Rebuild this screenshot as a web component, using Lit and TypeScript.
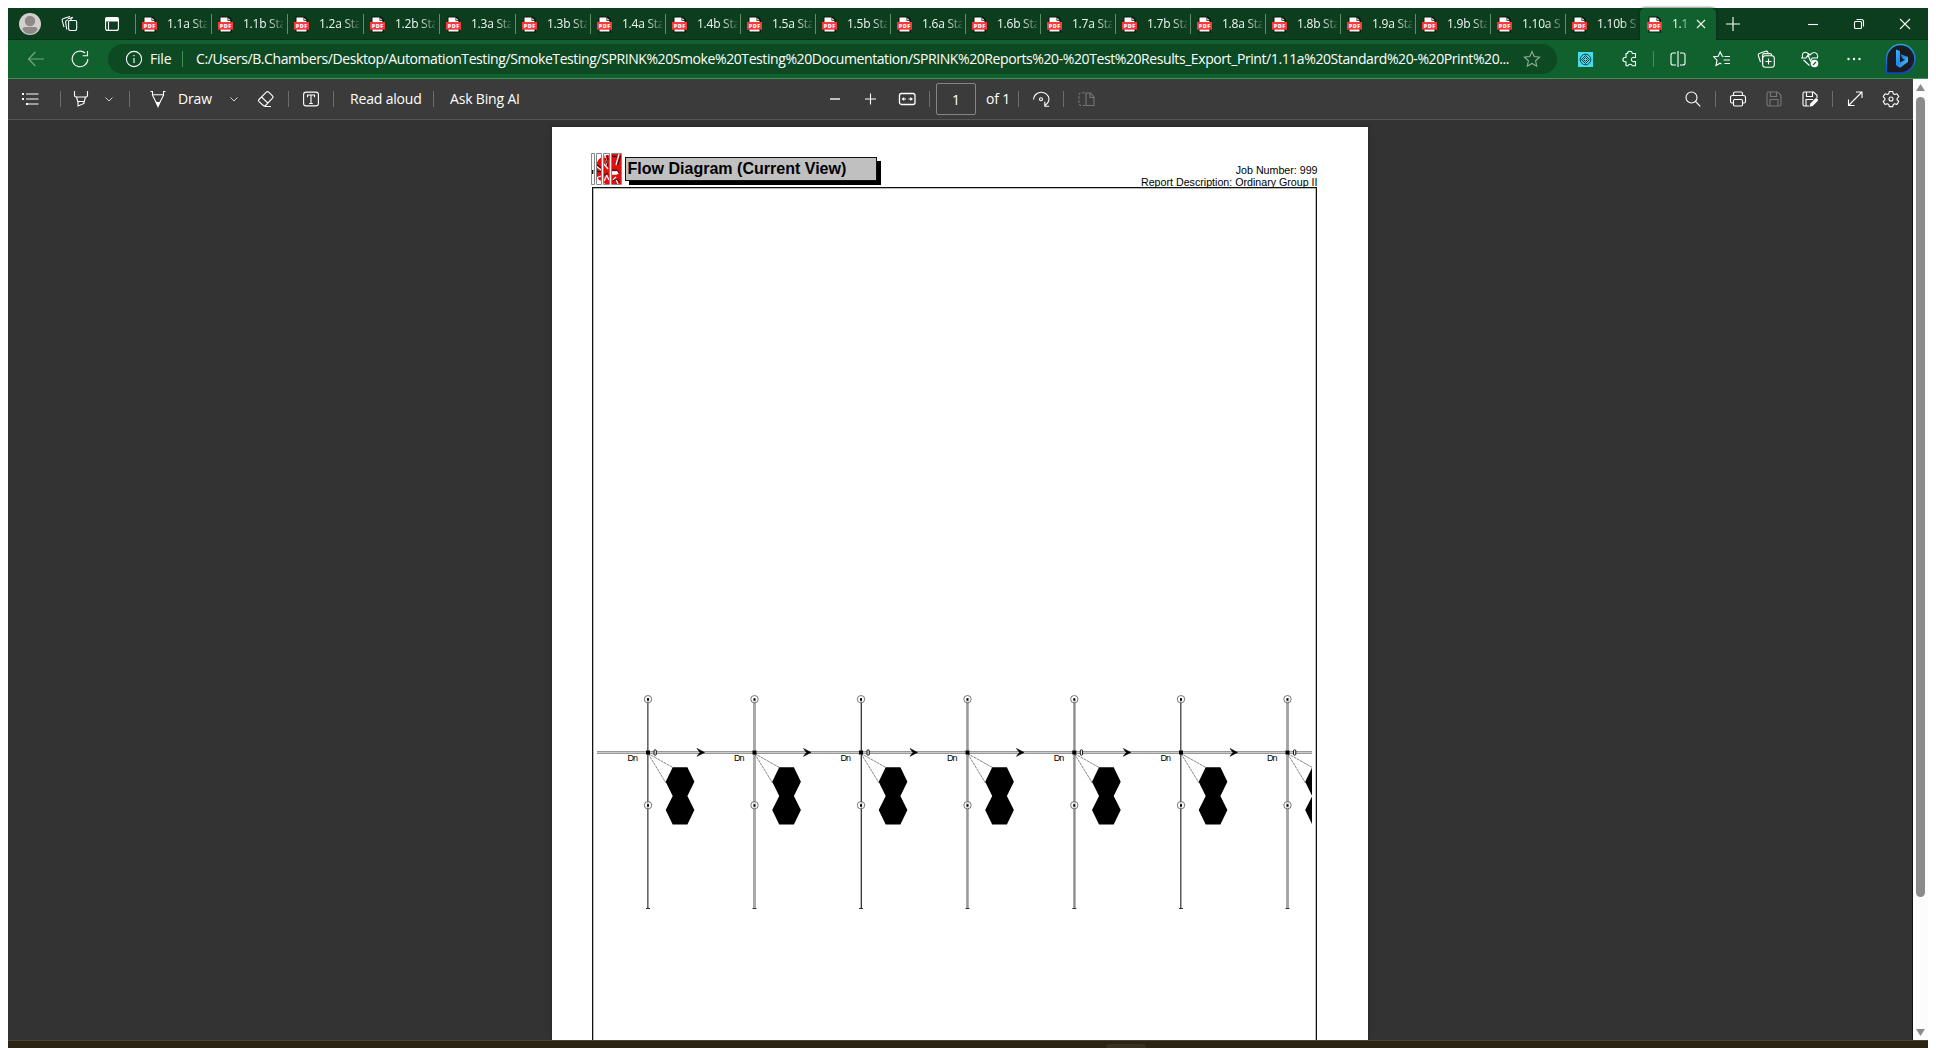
import { LitElement, html, css, svg, nothing } from "lit";
import { customElement, property } from "lit/decorators.js";

const icons: Record<string, unknown> = {
  workspaces: svg`<path d="M2.500 3.500 9 1.500M2.500 3.500Q.8 4 1.200 5.600l1.800 6.500M5.800 5.200Q4.400 5.600 4.600 7.200l1.200 7.300M5.800 5.200l1.200-.4M7 3.700l5-1.400M8.500 5.500h5.500q1.700 0 1.700 1.700v6.600q0 1.700-1.700 1.700H9.300q-1.700 0-1.700-1.700V6.500q0-1 .9-1zM10 5.300V4.200q0-1.500 1.500-1.500h.5"/>`,
  tabmenu: svg`<rect x="2.600" y="2.600" width="12.800" height="12.800" rx="2"/><path d="M3 3h12v3H3z" fill="currentColor"/><path d="M5.500 7v8"/>`,
  back: svg`<path d="M17 9H1.500M8.300 2 1.500 9l6.800 7"/>`,
  reload: svg`<path d="M16.800 9a7.800 7.800 0 1 1-2.700-6M16.500 1v4.800h-4.800"/>`,
  info: svg`<circle cx="9" cy="9" r="7.600"/><path d="M9 8v5M9 5v1.300"/>`,
  star: svg`<path d="m9 1.500 2.200 5 5.400.6-4 3.700 1.100 5.400L9 13.500l-4.700 2.700 1.100-5.400-4-3.700 5.400-.6z"/>`,
  puzzle: svg`<path d="M5 3.500h1.500a2.400 2.200 0 1 1 4.800 0H14.500v4h-1a2.200 2.200 0 1 0 0 4h1v4.300h-3.200a2.200 2 0 0 0-4.300 0H5V11.700H4a2.100 2.100 0 1 1 0-4.200h1z" stroke-linejoin="round"/>`,
  split: svg`<path d="M7 3H4Q2 3 2 5v8q0 2 2 2h3M11 3h3q2 0 2 2v8q0 2-2 2h-3M9 1v16"/>`,
  favs: svg`<path d="M10.500 6.500 9.300 6.300 7.200 1.800 5.200 6.300l-4.500.5L4 10.200 3 15.500l4-2.300 1.500.9M11.500 6.500H17M10.500 10H17M11.500 13.500H17"/>`,
  collections: svg`<rect x="5.700" y="5.700" width="11.600" height="11.600" rx="2.500"/><path d="M11.500 8.500v6M8.500 11.500h6M3.500 12 1.300 5.500Q.9 4 2.300 3.400L8.500 1.200Q10 .8 10.700 2l.6 1.700M5.500 14V5.500Q5.700 3.600 7.500 3.600H13q1.500 0 2 2"/>`,
  heart: svg`<path d="M8.500 15.500 2.500 10M16.300 8q1-2.300-.3-4-2.800-3-6 0L8.900 5 7.800 4Q4.500 1 2 3.300.8 5.300 1.500 7.500M0 8h5l2-3 2.500 6 1.700-3H17"/><circle cx="13.500" cy="13.500" r="3.800" fill="currentColor" stroke="none"/><path d="m12 15 3-3" stroke="#11612e"/>`,
  dots: svg`<g fill="currentColor" stroke="none"><circle cx="3.500" cy="9" r="1.200"/><circle cx="9" cy="9" r="1.200"/><circle cx="14.500" cy="9" r="1.200"/></g>`,
  close: svg`<path d="m5 5 8 8m0-8-8 8"/>`,
  winclose: svg`<path d="m4 4 10 10M14 4 4 14"/>`,
  newtab: svg`<path d="M9 2v14M2 9h14"/>`,
  minimize: svg`<path d="M4 9.500h10"/>`,
  restore: svg`<path d="M6.500 4.500h5q2 0 2 2v5"/><rect x="4.500" y="6.500" width="7" height="7" rx="1"/>`,
  list: svg`<path d="M5 4h12.500M5 9h12.500M5 14h12.500"/><path d="M1 3h2v2H1zM1 8h2v2H1zM5 13h2v2H5z" fill="currentColor" stroke="none"/>`,
  highlighter: svg`<path d="M2.500 1v4Q2.500 7 4 7h10q1.500 0 1.500-2V1M4.500 7l1.200 4.500h6.600L13.500 7M6 11.500V16l6-2.500v-2"/>`,
  chevron: svg`<path d="m5.500 7.500 3.500 3.500 3.500-3.500" stroke-width=".9" opacity=".85"/>`,
  pen: svg`<path d="M1.500 1.500h2v3.200h11V1.500h2M3.200 4.700 8 14h2l4.800-9.300"/><path d="M7.300 12.500h3.400L9 16.500z" fill="currentColor"/>`,
  eraser: svg`<path d="m2 9.500 7.300-7.300q1.200-1.200 2.400 0l3.800 3.600q1.200 1.200 0 2.400L8.500 15.500q-1 1-2.200 0L2 11.700q-1.100-1.100 0-2.200zM4.600 7l6.200 6.200M7.500 16.500H14"/>`,
  textbox: svg`<rect x="1.600" y="2.100" width="14.800" height="13.800" rx="2.500"/><path d="M5.500 7.200V5h7v2.200M9 5v8.500M7.200 13.500h3.600"/>`,
  minus: svg`<path d="M4 9h10" stroke-width="1.800" opacity=".75"/>`,
  plus: svg`<path d="M4 9h11M9.500 3.500v11"/>`,
  fit: svg`<rect x="1.500" y="3.500" width="15.500" height="11" rx="2" stroke-width="1.300"/><path d="M4 9h4M10.500 9h4"/><path d="M6.200 7V11L3.800 9zM12.300 7V11L14.700 9z" fill="currentColor" stroke="none"/>`,
  rotate: svg`<path d="M1.500 9.500A7.800 7.500 0 0 1 17 8.500q0 4.500-4.500 7.200M12.800 11.700v4.500h4.300"/><circle cx="9" cy="9.200" r="1.500"/>`,
  pages: svg`<path d="M9 3h4.500L17 7v8.500H9zM13 3v4.500h4"/><path d="M7.500 2.800H4.500Q2 2.800 2 5v8q0 2.500 2.500 2.500H8" stroke-dasharray="2.500 1.500"/>`,
  search: svg`<circle cx="7.500" cy="7.500" r="5.500"/><path d="m11.500 11.500 4.800 4.800"/>`,
  print: svg`<path d="M4.500 5.500v-2q0-1.500 1.500-1.500h6q1.500 0 1.500 1.500v2M4.500 13H3q-1.500 0-1.500-1.500V7.500q0-2 2-2h11q2 0 2 2v4q0 1.500-1.500 1.500h-1.500"/><rect x="4.500" y="9.500" width="9" height="6.500" rx="1.200"/>`,
  save: svg`<path d="M3.500 2h9L16 5.300V14.500q0 1.500-1.500 1.500h-11Q2 16 2 14.500v-11Q2 2 3.500 2zM5.500 2v4.500h6V2M5 16V9.500h8V16"/>`,
  saveas: svg`<path d="M8 16H3.500Q2 16 2 14.500v-11Q2 2 3.500 2h9L16 5.300V8M5.500 2v4.500h6V2M5 16V9.500h7"/><path d="m8.500 16.800.8-3.200 5-5q1.200-.8 2.200.2t.2 2.200l-5 5z" fill="currentColor" stroke="none"/>`,
  expand: svg`<path d="M10 2h6v6M16 2 2.500 15.500M2.500 9.500v6h6"/>`,
  gear: svg`<path d="M7.300 1.500h3.400l.6 2.300 1.300.7 2.300-.8 1.900 2.900-1.700 1.700v1.500l1.700 1.700-1.900 2.900-2.300-.7-1.300.7-.6 2.200H7.300l-.6-2.200-1.300-.7-2.300.7-1.900-2.900 1.700-1.700V8.300L1.200 6.600l1.900-2.900 2.300.8 1.300-.7z" stroke-linejoin="round"/><circle cx="9" cy="9" r="2"/>`,
};

const glyph = (name: string, cls = "") => html`
  <svg class="icon ${cls}" width="18" height="18" viewBox="0 0 18 18" fill="none" stroke="currentColor" stroke-width="1.1">${icons[name]}</svg>`;

const pdfBadge = html`
  <svg class="pdf" width="17" height="17" viewBox="0 0 17 17">
    <path d="M2.500.5H12l3 3v13H2.500z" fill="#07190d"/>
    <path d="M3.500 1.500h7.500l2.500 2.500v11.500h-10z" fill="#fff"/>
    <path d="M10.500 1h1.500l2.500 2.500v1.200h-4z" fill="#07190d"/>
    <path d="M11.300 2v2h2z" fill="#fff"/>
    <rect x="1" y="6" width="15" height="7.700" fill="#f8383b"/>
    <text x="8.500" y="11.900" text-anchor="middle" textLength="11.500" class="pdf-text">PDF</text>
  </svg>`;

@customElement("browser-tab")
class BrowserTab extends LitElement {
  @property() label = "";
  @property({ type: Boolean, reflect: true }) active = false;
  static styles = css`
    :host { display: flex; width: 75px; box-sizing: border-box; align-items: center; padding-left: 6px; color: #f2f7f3;
      height: 32px; background: linear-gradient(#5c9065, #5c9065) 0 6px / 1px 20px no-repeat; flex: none; }
    :host([wide]) { width: 76px; }
    :host([active]) { width: 76px; background: #11612e; border-radius: 5px 5px 0 0; box-shadow: 0 0 3px #062612; }
    .pdf { flex: none; }
    .pdf-text { font: 800 5.500px "Open Sans", sans-serif; fill: #fff; }
    .label { margin-left: 9px; width: 40px; overflow: hidden; white-space: nowrap; font: 12px/18px "Open Sans", sans-serif;
      letter-spacing: -0.25px; mask-image: linear-gradient(90deg, #000 60%, transparent 110%); }
    :host([active]) .label { width: 16px; }
    .icon { margin-left: 4px; }
  `;
  render() {
    return html`${pdfBadge}<span class="label">${this.label}</span>${this.active ? glyph("close") : nothing}`;
  }
}

interface Branch { x: number; strokes: string[]; mark: boolean; }
const branches: Branch[] = [
  { x: 648, strokes: ["#666", "#a0a0a0"], mark: true },
  { x: 754.500, strokes: ["#aaa", "#aaa", "#aaa"], mark: false },
  { x: 861, strokes: ["#bbb", "#3a3a3a"], mark: true },
  { x: 967.500, strokes: ["#aaa", "#999", "#b4b4b4"], mark: false },
  { x: 1074.300, strokes: ["#aaa", "#8c8c8c", "#b8b8b8"], mark: true },
  { x: 1181, strokes: ["#5a5a5a", "#aaa"], mark: false },
  { x: 1287.500, strokes: ["#aaa", "#a4a4a4", "#aaa"], mark: true },
];

@customElement("flow-diagram")
class FlowDiagram extends LitElement {
  static styles = css`
    :host { display: block; }
    svg { display: block; }
    .dn { font: 9px "Liberation Sans", Arial, sans-serif; }
  `;
  private sprinkler(x: number, y: number) {
    return svg`<circle cx=${x} cy=${y} r="3.700" fill="#fff" fill-opacity=".6" stroke="#555" stroke-width=".8"/>
      <rect x=${x - 1} y=${y - 1} width="2" height="2.500"/>`;
  }
  private branch(b: Branch) {
    const { x } = b;
    const left = Math.floor(x) - 1;
    return svg`
      ${b.strokes.map((c, i) => svg`<rect x=${left + i} y="699" width="1" height="209.500" fill=${c}/>`)}
      <rect x=${x - 2} y="908" width="4" height="1" fill="#333"/>
      ${this.sprinkler(x, 699.200)}${this.sprinkler(x, 805.200)}
      <path d="M${x} 753.500 L${x + 24.500} 767.300 M${x} 753.500 L${x + 18} 783" stroke="#555" stroke-width=".7" stroke-dasharray="3 .6" fill="none"/>
      <rect x=${x - 2} y="750.500" width="4" height="4"/>
      ${b.mark ? svg`<rect x=${x + 6} y="749.800" width="2.300" height="5.400" rx="1" fill="#eee" stroke="#111"/>` : nothing}
      <text class="dn" x=${x - 20.500} y="761.300" textLength="10.500">Dn</text>
      <path d="M${x + 49} 748.500 L${x + 56.500} 752.400 L${x + 49} 756.300 L${x + 52} 752.400z" stroke="#000" stroke-width=".6"/>
      <path d="M${x + 24.700} 767.300h14.700l7 14.500-7 14.300 7 14-7 14.400h-14.700l-7-14.400 7-14-7-14.300z"/>`;
  }
  render() {
    return html`
      <svg width="723" height="851" viewBox="593 188 723 851">
        <clipPath id="view"><rect x="597" y="189" width="715" height="851"/></clipPath>
        <g clip-path="url(#view)">
          <rect x="597" y="751" width="715" height="3" fill="#999"/>
          <rect x="597" y="752" width="715" height="1" fill="#ccc"/>
          ${branches.map((b) => this.branch(b))}
        </g>
      </svg>`;
  }
}

@customElement("app-root")
class AppRoot extends LitElement {
  static styles = css`
    :host { display: block; height: 1048px; overflow: hidden; background: #fff; }
    .window { display: flex; flex-direction: column; width: 1920px; height: 1040px; margin: 8px 0 0 8px;
      font: 14px/20px "Open Sans", sans-serif; color: #fff; }
    svg { flex: none; }
    .tabs { display: flex; align-items: center; height: 32px; background: #0c3d1e; box-shadow: inset 0 -1px #0a2f17; }
    .avatar { margin-left: 11px; }
    .workspaces { margin-left: 20px; }
    .tabmenu { margin: 0 14px 0 24px; }
    .newtab { margin-left: 8px; }
    .min { margin-left: 62px; }
    .win { margin-left: 28px; }
    .address { display: flex; align-items: center; height: 39px; box-sizing: border-box; background: #11612e; border-bottom: 1px solid #3e9057; }
    .back { margin-left: 19px; color: #6fae7f; }
    .reload { margin-left: 26px; }
    .pill { display: flex; align-items: center; box-sizing: border-box; width: 1449px; height: 30px; margin-left: 19px; padding-left: 17px;
      border-radius: 15px; background: #0d4a23; white-space: nowrap; }
    .file { width: 32px; margin-left: 7px; letter-spacing: -0.2px; }
    .sep { width: 1px; height: 16px; background: #6c6c6c; flex: none; }
    .address .sep { background: #3f8f56; }
    .url { width: 1314px; flex: none; margin-left: 13px; letter-spacing: -0.412px; }
    .star { margin-left: 13px; color: #8fae99; }
    .ext { margin-left: 21px; }
    .puzzle { margin: 0 14px 0 28px; }
    .split { margin-left: 15px; }
    .act { margin-left: 26px; }
    .bing { margin-left: 22px; }
    .body { display: flex; flex: 1; min-height: 0; }
    .viewer { display: flex; flex-direction: column; width: 1905px; background: #333; box-sizing: border-box; }
    .pdfbar { display: grid; align-items: center; height: 41px; box-sizing: border-box; padding-left: 13px; background: #3b3b3b;
      border-bottom: 1px solid #555; white-space: nowrap; flex: none;
      grid-template-columns: 39px 12px 28px 29px 20px 29px 47px 32px 31px 14px 31px 17px 83px 17px 376px 35px 37px 31px 7px 50px 32px 14px 31px 14px 607px 31px 14px 36px 36px 31px 14px 36px 18px; }
    .dim { color: #777; }
    .pagebox { width: 40px; height: 32px; box-sizing: border-box; border: 1px solid #858585; border-radius: 2px; text-align: center; line-height: 31px; }
    .tight { letter-spacing: -0.17px; }
    .canvas { display: flex; justify-content: center; flex: 1; min-height: 0; padding: 7px 0 0 0; border-right: 1px solid #111; }
    .page { width: 816px; margin-right: 1px; background: #fff; color: #000; box-shadow: 0 0 4px #222; box-sizing: border-box; padding: 26px 50px 0 39px; overflow: hidden; }
    .head { display: flex; height: 34px; }
    .title { width: 252px; height: 24px; margin: 4px 0 0 3px; box-sizing: border-box; border: 1px solid #111; background: #c0c0c0;
      box-shadow: 4px 4px #000; padding-left: 2px; font: bold 16.050px/21px "Liberation Sans", Arial, sans-serif; white-space: nowrap; }
    .meta { margin: 11px 0 0 auto; text-align: right; font: 10.670px/12px "Liberation Sans", Arial, sans-serif; white-space: nowrap; }
    .frame { margin-left: 1px; width: 723px; height: 860px; border: 1px solid #111; box-shadow: inset 0 0 0 .5px #777; }
    .scroll { display: flex; flex-direction: column; align-items: center; justify-content: space-between; width: 15px; padding: 5px 0 4px; box-sizing: border-box; background: #fcfcfc; }
    .thumb { width: 9px; height: 800px; border-radius: 5px; background: #8b8b8b; margin: 6px 0 auto; }
    .strip { height: 8px; box-sizing: border-box; background: #2b2415; border-top: 1px solid #4a4438; flex: none; display: flex; justify-content: center; }
    .notch { width: 40px; height: 4px; margin: 3px 0 0 315px; border-radius: 4px 4px 0 0; background: #39311f; }
  `;
  render() {
    const names = Array.from({ length: 10 }, (_, i) => i < 9
      ? [`1.${i + 1}a Sta`, `1.${i + 1}b Sta`]
      : [`1.${i + 1}a S`, `1.${i + 1}b S`]).flat();
    const sep = html`<span class="sep"></span>`;
    return html`
      <div class="window">
        <div class="tabs">
          <svg class="avatar" width="22" height="22" viewBox="0 0 22 22">
            <circle cx="11" cy="11" r="11" fill="#d2cfcc"/><circle cx="11" cy="8" r="5.200" fill="#8e8a87"/>
            <path d="M3.500 16.500Q3.500 14 6 14h10q2.500 0 2.500 2.500Q16 21 11 21T3.500 16.500z" fill="#8e8a87"/>
          </svg>
          ${glyph("workspaces", "workspaces")}${glyph("tabmenu", "tabmenu")}
          ${names.map((n, i) => html`<browser-tab label=${n} ?wide=${i < 5}></browser-tab>`)}
          <browser-tab label="1.11" active></browser-tab>
          ${glyph("newtab", "newtab")}${glyph("minimize", "min")}${glyph("restore", "win")}${glyph("winclose", "win")}
        </div>
        <div class="address">
          ${glyph("back", "back")}${glyph("reload", "reload")}
          <div class="pill">
            ${glyph("info")}<span class="file">File</span>${sep}
            <span class="url">C:/Users/B.Chambers/Desktop/AutomationTesting/SmokeTesting/SPRINK%20Smoke%20Testing%20Documentation/SPRINK%20Reports%20-%20Test%20Results_Export_Print/1.11a%20Standard%20-%20Print%20...</span>
            ${glyph("star", "star")}
          </div>
          <svg class="ext" width="15" height="15" viewBox="0 0 15 15" fill="none" stroke="#123a40">
            <rect width="15" height="15" fill="#45dcec" stroke="none"/><circle cx="7.500" cy="7.500" r="5.300"/>
            <path d="m3.500 7.500 4-4 4 4-4 4zM5.500 7.500l2-2 2 2-2 2z"/>
          </svg>
          ${glyph("puzzle", "puzzle")}${sep}${glyph("split", "split")}${glyph("favs", "act")}${glyph("collections", "act")}${glyph("heart", "act")}${glyph("dots", "act")}
          <svg class="bing" width="32" height="32" viewBox="0 0 32 32">
            <defs>
              <linearGradient id="ring" x2="0" y2="1"><stop stop-color="#2b9fe0"/><stop offset="1" stop-color="#1440c8"/></linearGradient>
              <linearGradient id="b" x2="1" y2="1"><stop stop-color="#38b6ff"/><stop offset=".5" stop-color="#2284f0"/><stop offset="1" stop-color="#52dcf5"/></linearGradient>
            </defs>
            <path d="M1.500 30V16a14.200 14.200 0 1 1 14.500 14z" fill="#1b1c22" stroke="url(#ring)" stroke-width="1.500"/>
            <path d="m11 6.500 4 1.600v11.400l5-2.700-2.500-1.200-1.800-4.300 7.300 2.800v4.700l-8 6-4-2.600z" fill="url(#b)"/>
          </svg>
        </div>
        <div class="body">
          <div class="viewer">
            <div class="pdfbar">
              ${glyph("list")}${sep}${glyph("highlighter")}${glyph("chevron")}${sep}${glyph("pen")}<span class="tight">Draw</span>${glyph("chevron")}${glyph("eraser")}${sep}
              ${glyph("textbox")}${sep}<span class="tight">Read aloud</span>${sep}<span class="tight">Ask Bing AI</span>
              ${glyph("minus")}${glyph("plus")}${glyph("fit")}${sep}<span class="pagebox">1</span><span class="tight">of 1</span>${sep}${glyph("rotate")}${sep}${glyph("pages", "dim")}
              ${glyph("search")}${sep}${glyph("print")}${glyph("save", "dim")}${glyph("saveas")}${sep}${glyph("expand")}${glyph("gear")}
            </div>
            <div class="canvas">
              <div class="page">
                <div class="head">
                  <svg width="31" height="32" viewBox="0 0 31 32">
                    <rect width="31" height="32" fill="#fff"/>
                    <path d="M1 19l1.500-3v5zM5 11l3-5 3-2v24l-3-1-3-5zM12 3l7-1v29h-5l-2-3zM20 1h10v30H20z" fill="#e01010"/>
                    <g stroke="#fff" stroke-width="1.300" fill="none"><path d="M5 13l5 4M5 25l5-2M14 3l2 9M13 11l4 5M13 28l3-6M18 27l-2-4M28 1l-3 11M22 27l3-3M27 31l-2-5"/><path d="M21 20h4l2-1" stroke-width="3.500"/></g>
                    <path d="M5 11l5 4M5 18l5 1M14 5l3 8M16 2l1 5M13 22l4-2M21 3l5 1M29.500 3l-3 9M21 17h5l2 3M22 28l3-2M29 29l-4-3M1.500 17v4" stroke="#111" fill="none"/>
                    <g fill="none" stroke="#888"><path d="M.5.5h3v31h-3zM5.500.5h5v31h-5zM12.500.5h6v31h-6zM20.500.5h10v31h-10z"/></g>
                    <path d="M4.500 0v32M11.500 0v32M19.500 0v32" stroke="#fff"/>
                  </svg>
                  <div class="title">Flow Diagram (Current View)</div>
                  <div class="meta">Job Number: 999<br/>Report Description: Ordinary Group II</div>
                </div>
                <div class="frame"><flow-diagram></flow-diagram></div>
              </div>
            </div>
          </div>
          <div class="scroll">
            <svg width="9" height="7" viewBox="0 0 9 7"><path d="M4.500 0 9 7H0z" fill="#8b8b8b"/></svg>
            <div class="thumb"></div>
            <svg width="9" height="7" viewBox="0 0 9 7"><path d="M4.500 7 9 0H0z" fill="#8b8b8b"/></svg>
          </div>
        </div>
        <div class="strip"><div class="notch"></div></div>
      </div>`;
  }
}
